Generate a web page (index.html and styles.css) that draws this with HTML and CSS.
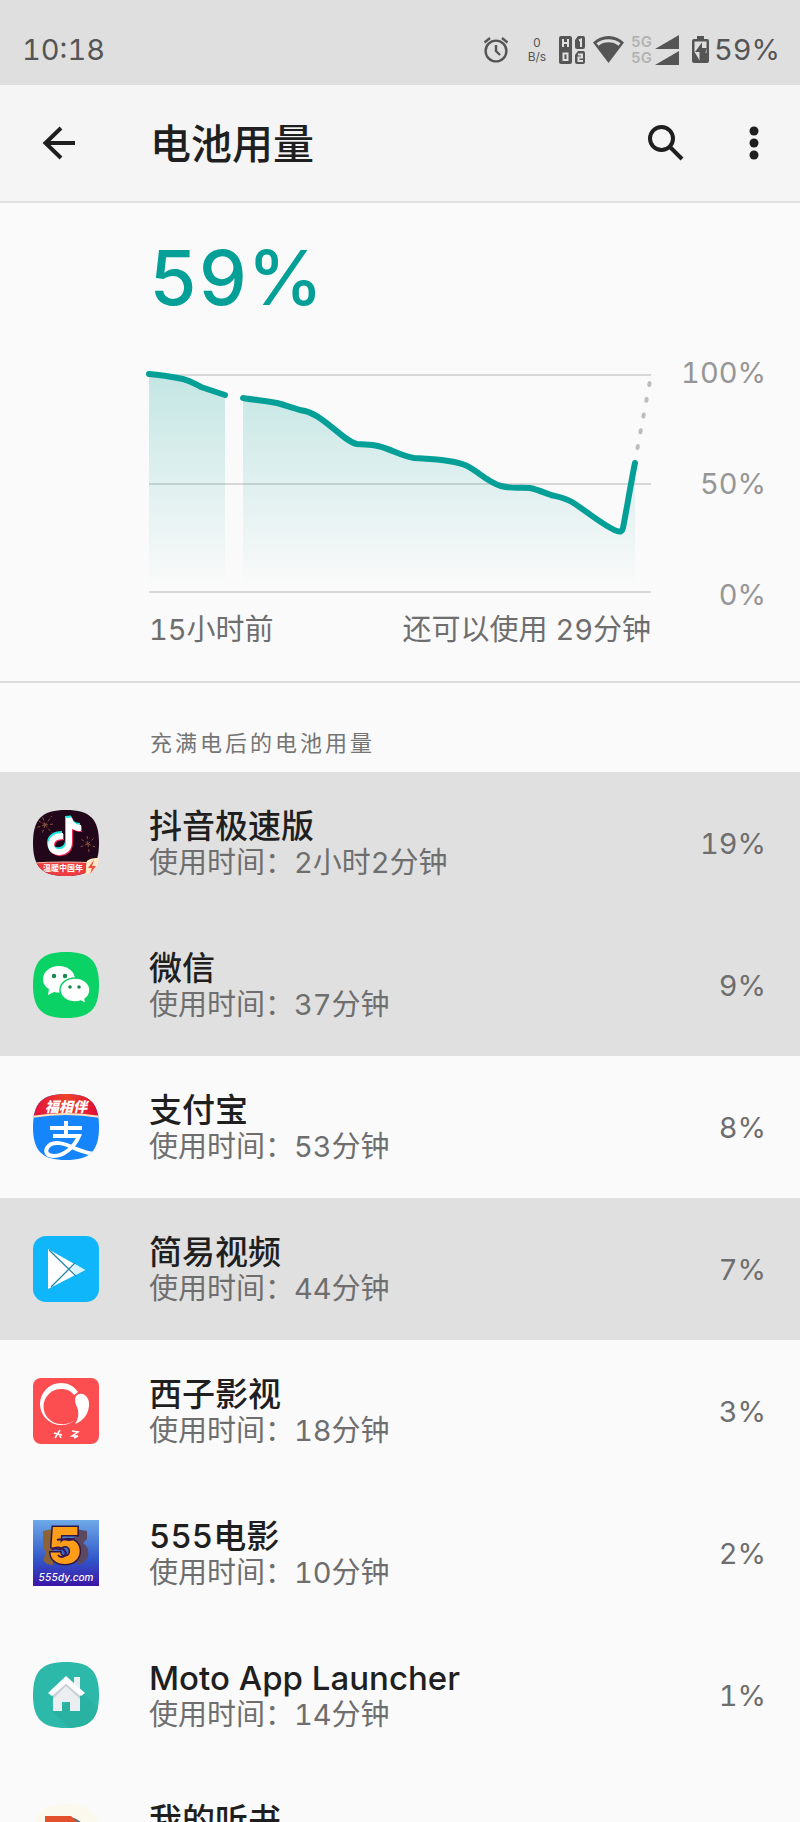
FILE: index.html
```
<!DOCTYPE html>
<html lang="zh-CN">
<head>
    <meta charset="UTF-8">
    <meta name="viewport" content="width=device-width, initial-scale=1.0">
    <title>电池用量</title>
    <link rel="stylesheet" href="styles.css">
</head>
<body>
    <div class="status-bar">
        <span class="clock">10:18</span>
        <div class="status-icons">
            <svg class="alarm" width="26" height="27" viewBox="0 0 26 27" fill="none" stroke="#555" stroke-width="2.4">
                <circle cx="13" cy="15" r="10.4"/>
                <path d="M13 9v6l4 4M1.5 6.5L7 2M24.500 6.500L19 2"/>
            </svg>
            <div class="net-speed"><span>0</span><span>B/s</span></div>
            <svg class="hd" width="27" height="28" viewBox="0 0 27 28">
                <path fill="#555" d="M3 0h8a2 2 0 0 1 2 2v24a2 2 0 0 1-2 2H2a2 2 0 0 1-2-2V2a2 2 0 0 1 2-2zM19 0h5a2 2 0 0 1 2 2v9a2 2 0 0 1-2 2h-6a2 2 0 0 1-2-2V4zM19 15h5a2 2 0 0 1 2 2v9a2 2 0 0 1-2 2h-6a2 2 0 0 1-2-2v-7z"/>
                <path fill="none" stroke="#dfdfdf" stroke-width="2" d="M4 3v8M9 3v8M4 7h5M4.500 17.500h4v6.500h-4zM20 4.500l2-1V11M19 18.500h4v3h-3.500V25H24"/>
            </svg>
            <svg class="wifi" width="31" height="27" viewBox="0 0 31 27">
                <path fill="#555" d="M15.500 0C9.500 0 4.200 2.200 0 6.500L15.500 27 31 6.500C26.800 2.200 21.500 0 15.500 0z"/>
                <path fill="none" stroke="#dfdfdf" stroke-width="3" d="M4.500 8.500C10.500 3.500 20.500 3.500 26.500 8.500"/>
            </svg>
            <div class="net-type"><span>5G</span><span>5G</span></div>
            <svg class="signal" width="24" height="30" viewBox="0 0 24 30" fill="#555">
                <path d="M24 0v14H0zM24 16v14H0z"/>
            </svg>
            <svg class="battery" width="17" height="27" viewBox="0 0 17 27">
                <path fill="#555" d="M5 0h7v3h3a2 2 0 0 1 2 2v20a2 2 0 0 1-2 2H2a2 2 0 0 1-2-2V5a2 2 0 0 1 2-2h3z"/>
                <path fill="#dfdfdf" d="M2.500 5.500h12V17h-1l1-5H10V6.500L3 16h4.500v8.500L5 20 2.500 16z"/>
                <path fill="#555" d="M10 7v6h3.500L8 23v-7H4z"/>
            </svg>
            <span class="battery-level">59%</span>
        </div>
    </div>

    <header class="app-bar">
        <button class="icon-btn" aria-label="返回">
            <svg width="34" height="34" viewBox="0 0 34 34" fill="none" stroke="#1f1f1f" stroke-width="4">
                <path d="M34 17H4M20 2L4.500 17 20 32"/>
            </svg>
        </button>
        <h1>电池用量</h1>
        <button class="icon-btn" aria-label="搜索">
            <svg width="36" height="36" viewBox="0 0 36 36" fill="none" stroke="#1f1f1f" stroke-width="4">
                <circle cx="13.500" cy="13.500" r="11.500"/>
                <path d="M21.500 21.500L34 34"/>
            </svg>
        </button>
        <button class="icon-btn more" aria-label="更多">
            <svg width="10" height="34" viewBox="0 0 10 34" fill="#1f1f1f">
                <circle cx="5" cy="5" r="4.500"/>
                <circle cx="5" cy="17" r="4.500"/>
                <circle cx="5" cy="29" r="4.500"/>
            </svg>
        </button>
    </header>

    <section class="summary">
        <div class="level">59%</div>
        <div class="chart">
            <div class="plot">
                <svg viewBox="0 0 502 228">
                    <defs>
                        <linearGradient id="fade" gradientUnits="userSpaceOnUse" x1="0" y1="9" x2="0" y2="222">
                            <stop offset="0" stop-color="#009e94" stop-opacity=".22"/>
                            <stop offset="1" stop-color="#009e94" stop-opacity="0"/>
                        </linearGradient>
                    </defs>
                    <path class="grid-line" d="M0 10H502M0 119H502M0 227H502"/>
                    <path fill="url(#fade)" d="M0 9C14 10 24 12 34 14C42 16 46 19 52 22L76 30V227H0z"/>
                    <path fill="url(#fade)" d="M94 33C106 35 118 36 128 38C140 41 146 44 156 46C176 51 195 77 208 79C216 80 221 79 229 81C242 84 252 91 265 93C285 94 302 95 316 100C328 105 338 117 352 121C364 124 370 122 381 123C390 125 396 128 402 130C410 132 416 133 423 137C436 145 456 162 468 166Q473 168 474 163L486 98V227H94z"/>
                    <path class="curve" d="M0 9C14 10 24 12 34 14C42 16 46 19 52 22L76 30"/>
                    <path class="curve" d="M94 33C106 35 118 36 128 38C140 41 146 44 156 46C176 51 195 77 208 79C216 80 221 79 229 81C242 84 252 91 265 93C285 94 302 95 316 100C328 105 338 117 352 121C364 124 370 122 381 123C390 125 396 128 402 130C410 132 416 133 423 137C436 145 456 162 468 166Q473 168 474 163C477 148 483 112 486 98"/>
                    <path class="forecast" d="M488.500 83L501 16"/>
                </svg>
                <div class="x-labels"><span>15小时前</span><span>还可以使用 29分钟</span></div>
            </div>
            <div class="y-labels"><span>100%</span><span>50%</span><span>0%</span></div>
        </div>
    </section>

    <h2 class="category">充满电后的电池用量</h2>

    <ul class="app-list">
        <li class="active">
            <a href="#">
                <svg class="app-icon" viewBox="0 0 66 66">
                    <clipPath id="squircle"><path d="M33 0C57 0 66 9 66 33S57 66 33 66 0 57 0 33 9 0 33 0z"/></clipPath>
                    <g clip-path="url(#squircle)">
                        <path fill="#22071b" d="M0 0h66v66H0z"/>
                        <g fill="none" stroke="#87513f" stroke-dasharray="3 2">
                            <path d="M12 15L3 9M12 15L9 5M12 15l7-9M12 15l9-1M12 15L2 18M12 15l-3 9M12 15l7 8"/>
                            <path d="M55 34l-7-5M55 34l-1-8M55 34l6-6M55 34l7 3M55 34l-8 3M55 34l1 8"/>
                        </g>
                        <g fill="none" stroke-width="6">
                            <path stroke="#f5235b" d="M31 27c-8 0-12 4-12 9 0 10 18 10 18-3V9c1 7 5 10 12 10"/>
                            <path stroke="#1fe8e0" d="M29 24c-8 0-12 4-12 9 0 10 18 10 18-3V6c1 7 5 10 12 10"/>
                            <path stroke="#fff" d="M30 26c-8 0-12 4-12 9 0 10 18 10 18-3V8c1 7 5 10 12 10"/>
                        </g>
                        <path fill="#ee3a40" stroke="#f8bfa0" d="M0 53q30-2 66 0v14H0z"/>
                        <text x="30" y="61" text-anchor="middle" font-size="8" font-weight="700" fill="#fff">温暖中国年</text>
                    </g>
                    <path fill="#ffe8c4" d="M54 51c4-3 7-3 12-3-1 9-5 15-14 17 2-5 0-9 2-14z"/>
                    <path fill="#f04b43" d="M61 50l-6 8h4l-2 6 6-8h-4z"/>
                </svg>
                <div class="app-text"><span class="app-name">抖音极速版</span><span class="app-time">使用时间：2小时2分钟</span></div>
                <span class="app-percent">19%</span>
            </a>
        </li>
        <li class="active">
            <a href="#">
                <svg class="app-icon" viewBox="0 0 66 66">
                    <path fill="#0bd264" d="M33 0C57 0 66 9 66 33S57 66 33 66 0 57 0 33 9 0 33 0z"/>
                    <path fill="#fff" d="M26 14c-9 0-16 6-16 13 0 4 2 8 6 10l-1 6 6-3c8 2 21-1 21-13 0-7-7-13-16-13z"/>
                    <path fill="#fff" stroke="#0bd264" stroke-width="1.500" d="M42 26c-8 0-15 5-15 12s7 12 15 12c2 0 4 0 6-1l5 3-1-5c3-2 5-5 5-9 0-7-7-12-15-12z"/>
                    <g fill="#17884d">
                        <circle cx="21" cy="24" r="2.200"/><circle cx="32" cy="24" r="2.200"/>
                        <circle cx="37" cy="35" r="1.800"/><circle cx="46" cy="35" r="1.800"/>
                    </g>
                </svg>
                <div class="app-text"><span class="app-name">微信</span><span class="app-time">使用时间：37分钟</span></div>
                <span class="app-percent">9%</span>
            </a>
        </li>
        <li>
            <a href="#">
                <svg class="app-icon" viewBox="0 0 66 66">
                    <defs>
                        <linearGradient id="ribbon"><stop stop-color="#e00d3d"/><stop offset=".5" stop-color="#f0442a"/><stop offset="1" stop-color="#dd0738"/></linearGradient>
                    </defs>
                    <g clip-path="url(#squircle)">
                        <path fill="#1684fb" d="M0 0h66v66H0z"/>
                        <path fill="url(#ribbon)" stroke="#ffe4c0" stroke-width="2" d="M-2-2h70v25Q33 17-2 23z"/>
                        <text x="33" y="18" text-anchor="middle" font-size="14" font-weight="900" font-style="italic" fill="#fff">福相伴</text>
                        <path fill="none" stroke="#fff" stroke-width="4" d="M17 34h32M33 27v14M20 42h26c-5 12-16 20-25 20-7 0-9-4-7-8 5-9 19-4 27 0 8 3 15 6 22 6"/>
                    </g>
                </svg>
                <div class="app-text"><span class="app-name">支付宝</span><span class="app-time">使用时间：53分钟</span></div>
                <span class="app-percent">8%</span>
            </a>
        </li>
        <li class="active">
            <a href="#">
                <svg class="app-icon" viewBox="0 0 66 66">
                    <rect width="66" height="66" rx="13" fill="#10b6fa"/>
                    <path fill="#fff" d="M15 13l37 21-37 19z"/>
                    <path fill="none" stroke="#2387a8" stroke-width="1.300" d="M16 14l27 26M18 51l24-24"/>
                    <path fill="#d8f3fd" d="M42 28l10 6-9 5-5-5z"/>
                </svg>
                <div class="app-text"><span class="app-name">简易视频</span><span class="app-time">使用时间：44分钟</span></div>
                <span class="app-percent">7%</span>
            </a>
        </li>
        <li>
            <a href="#">
                <svg class="app-icon" viewBox="0 0 66 66">
                    <rect width="66" height="66" rx="8" fill="#fc4e50"/>
                    <path fill="#fff" fill-rule="evenodd" d="M28 5a21 21 0 1 0 0 42 21 21 0 0 0 15-6 19 19 0 0 1-15 5 17.500 17.500 0 0 1 0-35c6 0 10 2 13 6l4-3C41 8 35 5 28 5z"/>
                    <path fill="#fff" d="M44 17c6-4 13 2 12 11-1 9-6 15-14 18 4-6 4-12 2-17-2-4-3-9 0-12z"/>
                    <path fill="none" stroke="#fff" stroke-width="1.500" d="M21 55l8 2M27 52l-5 8M26 56l2 4M39 53l6 1-6 4 6 0-4 2"/>
                </svg>
                <div class="app-text"><span class="app-name">西子影视</span><span class="app-time">使用时间：18分钟</span></div>
                <span class="app-percent">3%</span>
            </a>
        </li>
        <li>
            <a href="#">
                <svg class="app-icon" viewBox="0 0 66 66">
                    <defs>
                        <linearGradient id="dusk" x2="0" y2="1"><stop stop-color="#6eaae8"/><stop offset=".6" stop-color="#3157c9"/><stop offset="1" stop-color="#3c15a8"/></linearGradient>
                    </defs>
                    <path fill="url(#dusk)" d="M0 0h66v66H0z"/>
                    <path fill="#8c6239" d="M10 11l10-2v36q-7 0-10-5l3-7-3-6z"/>
                    <path fill="#5d4861" d="M42 9l12 2v8l-4 4q7 5 5 13-3 8-11 9z"/>
                    <text class="logo-five" x="32" y="43">5</text>
                    <path fill="none" stroke="#351650" stroke-width="2" d="M24 20c7-3 12 3 18-2M19 30c3-4 10-3 13 1 3 5-4 8-7 4"/>
                    <text x="33" y="61" text-anchor="middle" font-size="10" font-style="italic" font-weight="500" fill="#fff">555dy.com</text>
                </svg>
                <div class="app-text"><span class="app-name">555电影</span><span class="app-time">使用时间：10分钟</span></div>
                <span class="app-percent">2%</span>
            </a>
        </li>
        <li>
            <a href="#">
                <svg class="app-icon" viewBox="0 0 66 66">
                    <g clip-path="url(#squircle)">
                        <path fill="#2cb9aa" d="M0 0h66v66H0z"/>
                        <path fill="#29b2a2" d="M51 32l15 15v19H36L19 49z"/>
                    </g>
                    <path fill="#eceff1" d="M41 15h6v15h-6zM20 31l13-12 14 12v18H37v-9h-8v9H20z"/>
                    <path fill="#c9d0d4" d="M20 33l13-11 14 12v3L33 24 20 37z"/>
                    <path fill="#fff" d="M33 14l19 17-4 3-15-13-14 13-4-3z"/>
                </svg>
                <div class="app-text"><span class="app-name">Moto App Launcher</span><span class="app-time">使用时间：14分钟</span></div>
                <span class="app-percent">1%</span>
            </a>
        </li>
        <li>
            <a href="#">
                <svg class="app-icon" viewBox="0 0 66 66">
                    <path fill="#fbf9ee" d="M33 0C57 0 66 9 66 33S57 66 33 66 0 57 0 33 9 0 33 0z"/>
                    <path fill="#566a70" d="M34 13c11 0 18 7 20 17v21H34z"/>
                    <path fill="#e3502c" d="M12 12h26l6 6v34H12z"/>
                </svg>
                <div class="app-text"><span class="app-name">我的听书</span><span class="app-time">使用时间：9分钟</span></div>
                <span class="app-percent">1%</span>
            </a>
        </li>
    </ul>
</body>
</html>
```
FILE: styles.css
```
* {
    box-sizing: border-box;
}
body {
    margin: 0;
    height: 100vh;
    overflow: hidden;
    display: flex;
    flex-direction: column;
    background-color: #fafafa;
    color: #1f1f1f;
    font-family: Inter, "Noto Sans CJK SC", sans-serif;
    font-variant-numeric: tabular-nums;
}
svg {
    display: block;
    flex: none;
}
.status-bar {
    flex: none;
    display: flex;
    justify-content: space-between;
    align-items: center;
    height: 85px;
    padding: 14px 20px 0 22px;
    background-color: #dfdfdf;
    color: #555;
    font-size: 29px;
}
.status-icons {
    display: flex;
    align-items: center;
}
.net-speed {
    display: flex;
    flex-direction: column;
    align-items: center;
    width: 20px;
    margin: 0 12px 0 18px;
    font-size: 12px;
    line-height: 14px;
}
.wifi {
    margin: 0 7px;
}
.net-type {
    display: flex;
    flex-direction: column;
    margin-right: 3px;
    color: #b2b2b2;
    font-size: 15px;
    font-weight: 600;
    line-height: 16px;
}
.battery {
    margin: 0 5px 0 13px;
}
.app-bar {
    flex: none;
    display: flex;
    align-items: center;
    height: 118px;
    padding: 0 41px;
    background-color: #f5f5f5;
    border-bottom: 2px solid #e0e0e0;
}
.app-bar h1 {
    flex: 1;
    margin: 0 0 0 75px;
    padding-bottom: 5px;
    font-size: 41px;
    font-weight: 500;
}
.icon-btn {
    padding: 0;
    border: none;
    background: none;
    cursor: pointer;
}
.more {
    margin-left: 65px;
}
.summary {
    flex: none;
    padding: 30px 34px 30px 149px;
    border-bottom: 2px solid #dcdcdc;
}
.level {
    color: #04a098;
    font-size: 76px;
    font-weight: 500;
    line-height: 88px;
}
.chart {
    display: flex;
    justify-content: space-between;
    margin-top: 44px;
}
.plot {
    flex: 1;
}
.plot svg {
    width: 100%;
    overflow: visible;
}
.grid-line {
    stroke: #d8d8d8;
    stroke-width: 2;
}
.curve {
    fill: none;
    stroke: #04a098;
    stroke-width: 6;
    stroke-linecap: round;
    stroke-linejoin: round;
}
.forecast {
    stroke: #bdbdbd;
    stroke-width: 4;
    stroke-linecap: round;
    stroke-dasharray: 2 14;
}
.x-labels {
    display: flex;
    justify-content: space-between;
    margin-top: 16px;
    color: #6e6e6e;
    font-size: 29px;
    line-height: 42px;
}
.y-labels {
    display: flex;
    flex-direction: column;
    justify-content: space-between;
    align-items: flex-end;
    width: 115px;
    height: 258px;
    margin-top: -10px;
    color: #969696;
    font-size: 29px;
    line-height: 36px;
}
.category {
    flex: none;
    margin: 0;
    padding: 44px 0 13px 150px;
    color: #757575;
    font-size: 22px;
    font-weight: 400;
    line-height: 32px;
    letter-spacing: 3px;
}
.app-list {
    flex: 1;
    min-height: 0;
    margin: 0;
    padding: 0;
    overflow: hidden;
    list-style: none;
}
.app-list a {
    display: flex;
    align-items: center;
    height: 142px;
    padding: 0 34px 0 33px;
    color: inherit;
    text-decoration: none;
}
.active {
    background-color: #e0e0e0;
}
.app-icon {
    width: 66px;
    height: 66px;
}
.logo-five {
    fill: #ff9d19;
    stroke: #2b1648;
    stroke-width: 3px;
    paint-order: stroke;
    font-size: 50px;
    font-weight: 900;
    text-anchor: middle;
}
.app-text {
    flex: 1;
    display: flex;
    flex-direction: column;
    padding-top: 2px;
    margin-left: 50px;
}
.app-name {
    font-size: 33px;
    font-weight: 500;
    line-height: 38px;
}
.app-time {
    color: #6e6e6e;
    font-size: 29px;
    line-height: 36px;
}
.app-percent {
    color: #6e6e6e;
    font-size: 29px;
}
```
